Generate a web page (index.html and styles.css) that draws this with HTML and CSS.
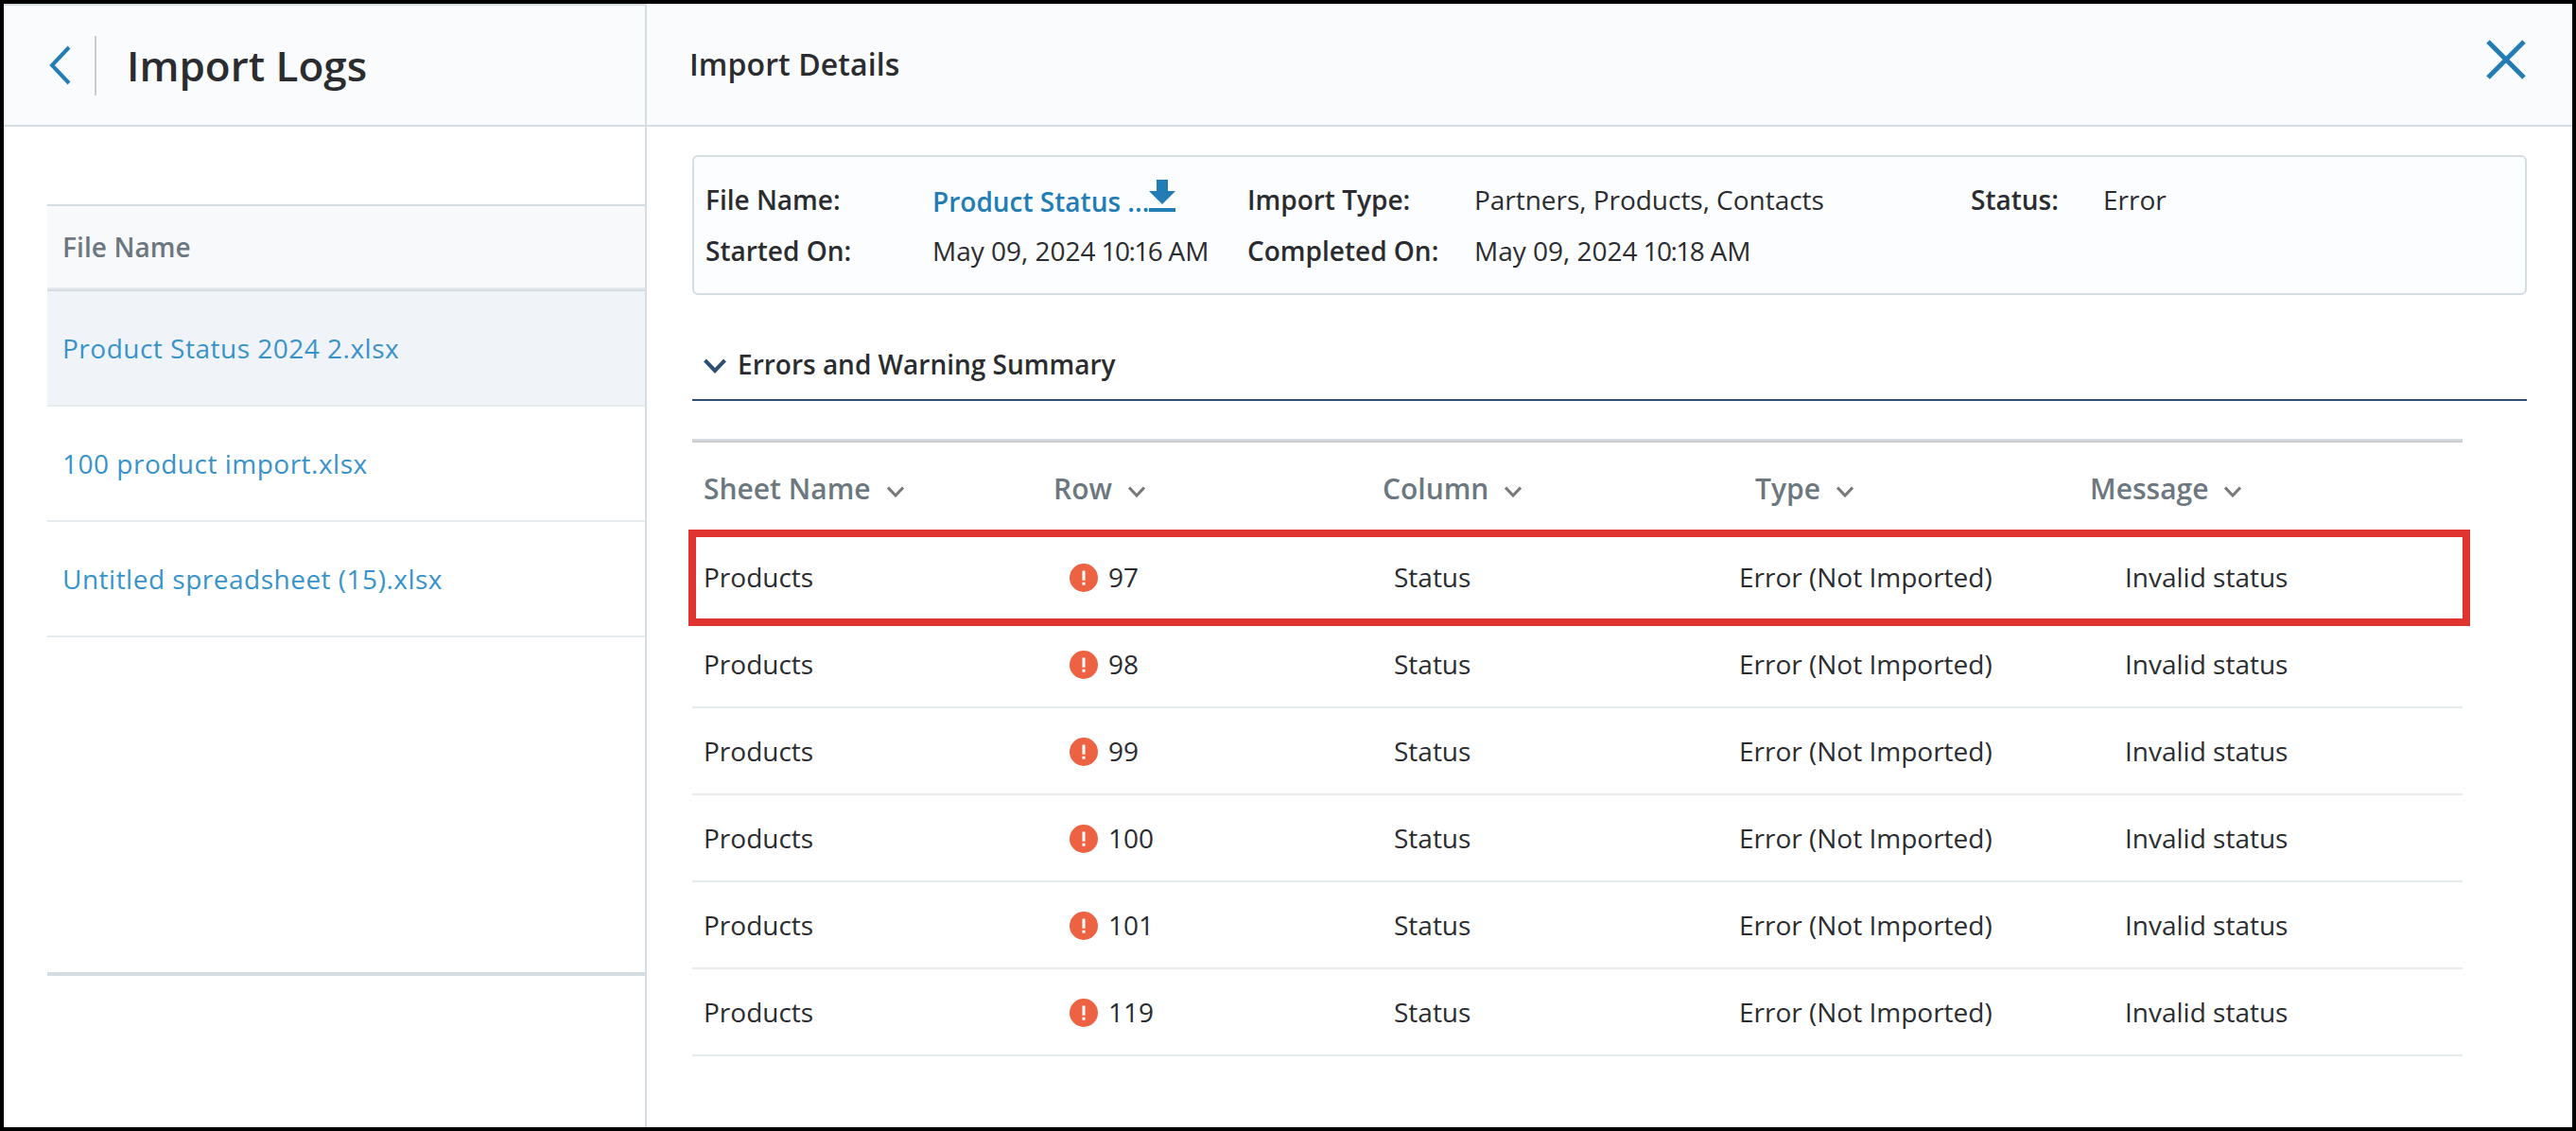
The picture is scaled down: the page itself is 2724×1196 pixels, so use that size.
FILE: index.html
```html
<!DOCTYPE html>
<html lang="en">
<head>
    <meta charset="UTF-8">
    <meta name="viewport" content="width=device-width, initial-scale=1.0">
    <title>Import Logs</title>
    <link rel="stylesheet" href="styles.css">
</head>
<body>
    <div class="sidebar">
        <div class="sidebar-header">
            <svg class="back-icon" viewBox="0 0 24 42"><path d="M21 2 L3 21 L21 40"/></svg>
            <span class="divider"></span>
            <h1 class="title">Import Logs</h1>
        </div>
        <div class="file-list">
            <div class="file-list-header">File Name</div>
            <a class="file-row selected">Product Status 2024 2.xlsx</a>
            <a class="file-row">100 product import.xlsx</a>
            <a class="file-row">Untitled spreadsheet (15).xlsx</a>
        </div>
    </div>

    <div class="details">
        <div class="details-header">
            <h2 class="details-title">Import Details</h2>
            <svg class="close-icon" viewBox="0 0 42 42"><path d="M2 2 L40 40 M40 2 L2 40"/></svg>
        </div>

        <div class="info-box">
            <span class="label">File Name:</span>
            <a class="file-link">Product Status ...<svg class="download-icon" viewBox="0 0 28 34"><path d="M8 0H20V12H28L14 26L0 12H8ZM0 30H28V34H0Z"/></svg></a>
            <span class="label">Import Type:</span>
            <span class="contacts">Partners, Products, Contacts</span>
            <span class="label">Status:</span>
            <span>Error</span>
            <span class="label">Started On:</span>
            <span>May 09, 2024<span class="time"> 10:16</span> AM</span>
            <span class="label">Completed On:</span>
            <span>May 09, 2024<span class="time"> 10:18</span> AM</span>
        </div>

        <div class="summary-header">
            <svg class="toggle-icon" viewBox="0 0 24 16"><path d="M1.5 2 L12 13 L22.5 2"/></svg>
            <h3 class="summary-title">Errors and Warning Summary</h3>
        </div>

        <div class="error-table">
            <div class="table-row table-head">
                <div class="head-cell">Sheet Name<svg class="sort-icon" viewBox="0 0 18 12"><path d="M1 1.5 L9 10 L17 1.5"/></svg></div>
                <div class="head-cell">Row<svg class="sort-icon" viewBox="0 0 18 12"><path d="M1 1.5 L9 10 L17 1.5"/></svg></div>
                <div class="head-cell">Column<svg class="sort-icon" viewBox="0 0 18 12"><path d="M1 1.5 L9 10 L17 1.5"/></svg></div>
                <div class="head-cell type-head">Type<svg class="sort-icon" viewBox="0 0 18 12"><path d="M1 1.5 L9 10 L17 1.5"/></svg></div>
                <div class="head-cell">Message<svg class="sort-icon" viewBox="0 0 18 12"><path d="M1 1.5 L9 10 L17 1.5"/></svg></div>
            </div>
            <div class="table-row highlighted">
                <div class="cell">Products</div>
                <div class="cell row-cell"><svg class="error-icon" viewBox="0 0 30 30"><circle cx="15" cy="15" r="15"/><path d="M13.5 7.5H16.5V17.8H13.5ZM13.5 19.8H16.5V22.8H13.5Z"/></svg>97</div>
                <div class="cell column-cell">Status</div>
                <div class="cell type-cell">Error (Not Imported)</div>
                <div class="cell message-cell">Invalid status</div>
            </div>
            <div class="table-row">
                <div class="cell">Products</div>
                <div class="cell row-cell"><svg class="error-icon" viewBox="0 0 30 30"><circle cx="15" cy="15" r="15"/><path d="M13.5 7.5H16.5V17.8H13.5ZM13.5 19.8H16.5V22.8H13.5Z"/></svg>98</div>
                <div class="cell column-cell">Status</div>
                <div class="cell type-cell">Error (Not Imported)</div>
                <div class="cell message-cell">Invalid status</div>
            </div>
            <div class="table-row">
                <div class="cell">Products</div>
                <div class="cell row-cell"><svg class="error-icon" viewBox="0 0 30 30"><circle cx="15" cy="15" r="15"/><path d="M13.5 7.5H16.5V17.8H13.5ZM13.5 19.8H16.5V22.8H13.5Z"/></svg>99</div>
                <div class="cell column-cell">Status</div>
                <div class="cell type-cell">Error (Not Imported)</div>
                <div class="cell message-cell">Invalid status</div>
            </div>
            <div class="table-row">
                <div class="cell">Products</div>
                <div class="cell row-cell"><svg class="error-icon" viewBox="0 0 30 30"><circle cx="15" cy="15" r="15"/><path d="M13.5 7.5H16.5V17.8H13.5ZM13.5 19.8H16.5V22.8H13.5Z"/></svg>100</div>
                <div class="cell column-cell">Status</div>
                <div class="cell type-cell">Error (Not Imported)</div>
                <div class="cell message-cell">Invalid status</div>
            </div>
            <div class="table-row">
                <div class="cell">Products</div>
                <div class="cell row-cell"><svg class="error-icon" viewBox="0 0 30 30"><circle cx="15" cy="15" r="15"/><path d="M13.5 7.5H16.5V17.8H13.5ZM13.5 19.8H16.5V22.8H13.5Z"/></svg>101</div>
                <div class="cell column-cell">Status</div>
                <div class="cell type-cell">Error (Not Imported)</div>
                <div class="cell message-cell">Invalid status</div>
            </div>
            <div class="table-row">
                <div class="cell">Products</div>
                <div class="cell row-cell"><svg class="error-icon" viewBox="0 0 30 30"><circle cx="15" cy="15" r="15"/><path d="M13.5 7.5H16.5V17.8H13.5ZM13.5 19.8H16.5V22.8H13.5Z"/></svg>119</div>
                <div class="cell column-cell">Status</div>
                <div class="cell type-cell">Error (Not Imported)</div>
                <div class="cell message-cell">Invalid status</div>
            </div>
        </div>
    </div>
</body>
</html>
```
FILE: styles.css
```css
*, *::after{
    box-sizing: border-box;
}
body{
    margin: 0;
    height: 1196px;
    display: flex;
    border: 4px solid #000000;
    background-color: #ffffff;
    color: #2b2c2f;
    font-family: "Open Sans", sans-serif;
    font-size: 28px;
}
h1, h2, h3{
    margin: 0;
    font-weight: 600;
}
svg{
    flex-shrink: 0;
    fill: none;
}

/* left panel */
.sidebar{
    width: 680px;
    border-right: 2px solid #d3dde2;
}
.sidebar-header{
    height: 130px;
    display: flex;
    align-items: center;
    border-top: 2px solid #d3dde2;
    border-bottom: 2px solid #d3dde2;
    padding-left: 48px;
    background-color: #fafbfd;
}
.back-icon{
    width: 24px;
    height: 42px;
    stroke: #237db5;
    stroke-width: 4;
}
.divider{
    width: 2px;
    height: 63px;
    margin: 0 32px 0 24px;
    background-color: #cbccce;
}
.title{
    font-size: 44px;
}
.file-list{
    height: 816px;
    margin: 82px 0 0 46px;
    border-top: 2px solid #d3dde2;
    border-bottom: 4px solid #d3dde2;
}
.file-list-header{
    height: 90px;
    padding: 0 16px;
    line-height: 86px;
    border-bottom: 2px solid #d3dde2;
    box-shadow: inset 0 -2px #e6eaed;
    background-color: #f8f9fb;
    color: #6c7780;
    font-weight: 600;
    letter-spacing: 0.1px;
}
.file-row{
    display: block;
    height: 122px;
    padding: 0 16px;
    line-height: 120px;
    border-bottom: 2px solid #e6ebee;
    color: #3893ca;
    letter-spacing: 0.5px;
}
.file-row.selected{
    background-color: #f0f4f8;
}

/* right panel */
.details{
    flex: 1;
}
.details-header{
    height: 130px;
    display: flex;
    align-items: center;
    justify-content: space-between;
    padding: 0 49px 0 45px;
    border-bottom: 2px solid #d3dde2;
    background-color: #fafbfd;
}
.details-title{
    margin-bottom: 1px;
    font-size: 32px;
    letter-spacing: 0.1px;
}
.close-icon{
    width: 42px;
    height: 42px;
    margin-bottom: 10px;
    stroke: #237db5;
    stroke-width: 5;
}
.info-box{
    height: 148px;
    margin: 30px 48px 0 48px;
    padding: 18px 10px 0 12px;
    display: grid;
    grid-template-columns: 240px 333px 240px 525px 140px 1fr;
    grid-template-rows: 54px 54px;
    line-height: 54px;
    border: 2px solid #d3dde2;
    border-radius: 6px;
    background-color: #fcfdff;
}
.label{
    font-weight: 600;
}
.contacts{
    letter-spacing: -0.03px;
}
.time{
    letter-spacing: -1.5px;
}
.file-link{
    display: flex;
    padding-top: 2px;
    color: #237db5;
    font-weight: 600;
}
.download-icon{
    width: 28px;
    height: 34px;
    margin-top: 4px;
    fill: #237db5;
}
.summary-header{
    height: 76px;
    margin: 36px 48px 0 48px;
    padding-left: 12px;
    display: flex;
    align-items: center;
    border-bottom: 2px solid #2f4f74;
}
.toggle-icon{
    width: 24px;
    height: 16px;
    margin: 4px 12px 0 0;
    stroke: #2f4f74;
    stroke-width: 4;
}
.summary-title{
    font-size: 28px;
}

.error-table{
    width: 1872px;
    margin: 40px 0 0 48px;
    border-top: 2px solid #d3dde2;
}
.table-row{
    position: relative;
    height: 92px;
    display: grid;
    grid-template-columns: 370px 348px 376px 372px 1fr;
    align-items: center;
    border-bottom: 2px solid #e6ebee;
}
.table-head{
    height: 99px;
    border-top: 2px solid #cccccc;
    border-bottom: none;
    color: #6c7780;
    font-size: 30px;
    font-weight: 600;
}
.head-cell, .cell{
    display: flex;
    align-items: center;
    padding-left: 12px;
}
.head-cell.type-head{
    padding-left: 30px;
}
.sort-icon{
    width: 18px;
    height: 12px;
    margin: 7px 0 0 17px;
    stroke: #77787a;
    stroke-width: 3;
}
.cell.row-cell{
    padding-left: 29px;
}
.cell.column-cell{
    padding-left: 24px;
}
.cell.type-cell{
    padding-left: 13px;
}
.cell.message-cell{
    padding-left: 49px;
}
.error-icon{
    width: 30px;
    height: 30px;
    margin: 2px 11px 0 0;
}
.error-icon circle{
    fill: #ed6243;
}
.error-icon path{
    fill: #ffffff;
}
/* red frame around the row in question */
.highlighted::after{
    content: "";
    position: absolute;
    top: -5px;
    left: -4px;
    width: 1884px;
    height: 102px;
    border: 8px solid #e03430;
}
```
